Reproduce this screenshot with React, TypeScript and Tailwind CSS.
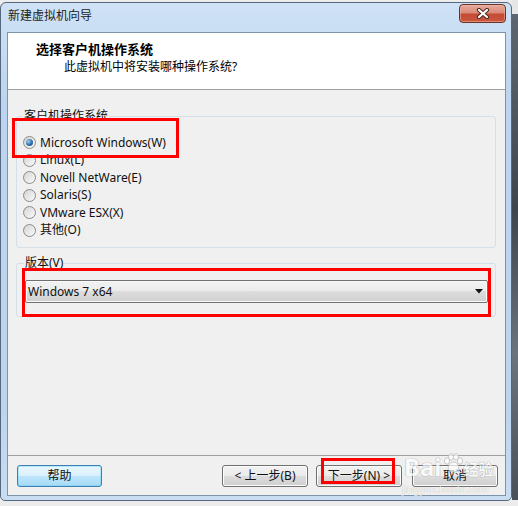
import React from "react";

const font = "font-['Noto_Sans','Noto_Sans_CJK_SC',sans-serif]";

const osList = [
    { label: "Microsoft Windows(W)", checked: true },
    { label: "Linux(L)", checked: false },
    { label: "Novell NetWare(E)", checked: false },
    { label: "Solaris(S)", checked: false },
    { label: "VMware ESX(X)", checked: false },
    { label: "其他(O)", checked: false },
];

function Radio({ checked }: { checked: boolean }) {
    return (
        <div className="w-[13px] h-[13px] rounded-full border border-[#8a8a8a] bg-gradient-to-br from-[#d4d4d4] to-[#fbfbfb] flex items-center justify-center shrink-0">
            {checked && (
                <div className="w-[7px] h-[7px] rounded-full bg-[radial-gradient(circle_at_35%_35%,#9ed0f5,#2c6ea8_55%,#1a4a78)]" />
            )}
        </div>
    );
}

function WinButton({ label, primary, className }: { label: string; primary?: boolean; className?: string }) {
    return (
        <div
            className={
                "h-[22px] rounded-[3px] border flex items-center justify-center text-[12px] leading-[16px] text-[#111] " +
                (primary
                    ? "border-[#3c7fb1] bg-[linear-gradient(#eaf6fd_0%,#d9f0fc_50%,#bee6fd_50%,#a7d9f5_100%)] shadow-[inset_0_0_0_1px_#48d2fd55] "
                    : "border-[#707070] bg-[linear-gradient(#f2f2f2_0%,#ebebeb_50%,#dddddd_50%,#cfcfcf_100%)] shadow-[inset_0_0_0_1px_#fcfcfc] ") +
                (className ?? "")
            }
        >
            {label}
        </div>
    );
}

function CloseGlyph() {
    return (
        <svg width="14" height="11" viewBox="0 0 14 11">
            <path d="M3 2 L11 9 M11 2 L3 9" stroke="#4a2a24" strokeWidth="4.2" strokeLinecap="round" />
            <path d="M3 2 L11 9 M11 2 L3 9" stroke="#ffffff" strokeWidth="2.2" strokeLinecap="round" />
        </svg>
    );
}

function Paw() {
    return (
        <svg width="22" height="20" viewBox="0 0 22 20">
            <g fill="#ffffff" stroke="#b9b9b9" strokeWidth="1">
                <ellipse cx="5" cy="8" rx="2.6" ry="3.2" />
                <ellipse cx="9" cy="3.8" rx="2.6" ry="3.2" />
                <ellipse cx="14" cy="3.8" rx="2.6" ry="3.2" />
                <ellipse cx="18" cy="8" rx="2.6" ry="3.2" />
                <path d="M11.5 9 C7 9 5 15 7 17.5 C9 19.5 14 19.5 16 17.5 C18 15 16 9 11.5 9 Z" />
            </g>
        </svg>
    );
}

export default function App() {
    return (
        <div className={"relative w-[518px] h-[506px] bg-[#ececec] flex overflow-hidden " + font}>
            {/* window */}
            <div className="mt-[2px] w-[512px] h-[499px] rounded-t-[6px] rounded-b-[5px] border border-[#55687d] bg-[linear-gradient(#cfe2f6,#bcd4ef_20%,#bcd4ee_80%,#c8dcf2)] flex flex-col shrink-0">
                {/* title bar */}
                <div className="h-[29px] flex items-start justify-between">
                    <span className="pl-[7px] pt-[5px] leading-[16px] text-[12px] text-[#1b1b1b]">新建虚拟机向导</span>
                    <div className="mt-[1px] mr-[5px] w-[47px] h-[19px] rounded-[4px] border border-[#6b3226] bg-[linear-gradient(#e7ab9c_0%,#d98a78_45%,#c44a33_55%,#c9583f_100%)] shadow-[inset_0_0_0_1px_#f0b9ab88] flex items-center justify-center">
                        <CloseGlyph />
                    </div>
                </div>

                {/* client */}
                <div className="ml-[6px] w-[499px] border border-[#7d93ab] flex flex-col">
                    {/* header */}
                    <div className="h-[57px] bg-white border-b border-[#a0a0a0] flex flex-col">
                        <div className="pl-[28px] pt-[8px] leading-[17px] text-[13px] font-bold text-black">选择客户机操作系统</div>
                        <div className="pl-[56px] mt-[1px] leading-[16px] text-[12px] text-black">此虚拟机中将安装哪种操作系统?</div>
                    </div>

                    {/* body */}
                    <div className="h-[365px] bg-[#f0f0f0] flex flex-col px-[8px] pr-[9px]">
                        <fieldset className="mt-[18px] border border-[#d5dfe5] rounded-[3px] pt-[10px] pb-[8px]">
                            <legend className="ml-[6px] px-[1px] leading-[16px] text-[12px] text-[#111]">客户机操作系统</legend>
                            {osList.map((os) => (
                                <div key={os.label} className="h-[17.5px] flex items-center gap-[4px] pl-[6px]">
                                    <Radio checked={os.checked} />
                                    <span className="text-[12px] leading-[16px] text-[#111]">{os.label}</span>
                                </div>
                            ))}
                        </fieldset>

                        <fieldset className="mt-[7px] border border-[#d5dfe5] rounded-[3px] pt-[9px] pb-[13px] pl-[8px] pr-[7px]">
                            <legend className="ml-[-1px] px-[1px] leading-[16px] text-[12px] text-[#111]">版本(V)</legend>
                            <div className="h-[23px] rounded-[2px] border border-[#707070] bg-[linear-gradient(#f2f2f2_0%,#ebebeb_50%,#dddddd_50%,#cfcfcf_100%)] shadow-[inset_0_0_0_1px_#fafafa] flex items-center justify-between pl-[2px] pr-[4px]">
                                <span className="text-[12px] leading-[16px] text-[#111]">Windows 7 x64</span>
                                <svg width="8" height="5" viewBox="0 0 8 5">
                                    <path d="M0 0 H8 L4 4.5 Z" fill="#111" />
                                </svg>
                            </div>
                        </fieldset>
                    </div>

                    {/* footer */}
                    <div className="h-[40px] bg-[#f0f0f0] border-t border-[#a0a0a0] flex items-start pt-[9px] pl-[9px] pr-[7px]">
                        <WinButton label="帮助" primary className="w-[85px]" />
                        <div className="flex-1" />
                        <WinButton label="< 上一步(B)" className="w-[86px]" />
                        <WinButton label="下一步(N) >" className="w-[86px] ml-[8px]" />
                        <WinButton label="取消" className="w-[86px] ml-[10px]" />
                    </div>
                </div>
            </div>

            {/* desktop behind, right edge */}
            <div className="flex-1 flex flex-col">
                <div className="h-[14px] bg-[#e6e6e6]" />
                <div className="flex-1 bg-[linear-gradient(#5d6670,#3f454d_40%,#6b737c_70%,#4a5058)]" />
                <div className="h-[6px] bg-[#ececec]" />
            </div>

            {/* annotations */}
            <div className="absolute left-[12px] top-[118px] w-[167px] h-[40px] border-[3px] border-[#ff0000]" />
            <div className="absolute left-[22px] top-[268px] w-[469px] h-[49px] border-[3px] border-[#ff0000]" />
            <div className="absolute left-[321px] top-[458px] w-[74px] h-[26px] border-[3px] border-[#ff0000]" />

            {/* watermark */}
            <div className="absolute left-[404px] top-[453px] flex items-end opacity-70 pointer-events-none">
                <span className="text-[24px] leading-[24px] font-bold text-white [text-shadow:0_0_1px_#8a8a8a,0_0_1px_#8a8a8a]">Bai</span>
                <div className="mb-[6px]"><Paw /></div>
                <span className="text-[15px] leading-[20px] font-bold text-white [text-shadow:0_0_1px_#8a8a8a,0_0_1px_#8a8a8a]">经验</span>
            </div>
            <div className="absolute left-[402px] top-[483px] text-[10px] leading-[12px] text-white opacity-70 [text-shadow:0_0_1px_#8a8a8a] pointer-events-none">jingyan.baidu.com</div>
        </div>
    );
}
